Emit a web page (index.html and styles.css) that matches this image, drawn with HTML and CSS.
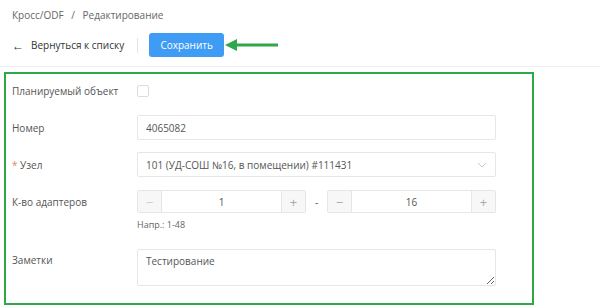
FILE: index.html
```html
<!DOCTYPE html>
<html lang="ru">
  <head>
    <meta charset="UTF-8" />
    <meta name="viewport" content="width=device-width, initial-scale=1.0" />
    <title>Кросс/ODF - Редактирование</title>
    <link rel="stylesheet" href="styles.css">
  </head>
  <body>
    <!-- breadcrumbs -->
    <div class="crumbs">Кросс/ODF <span class="sep">/</span> Редактирование</div>

    <!-- toolbar -->
    <div class="toolbar">
      <a class="back" href="#"><span class="back-arrow">&#8592;</span>Вернуться к списку</a>
      <span class="divider"></span>
      <button class="save">Сохранить</button>
      <svg class="pointer" width="56" height="14" viewBox="0 0 56 14">
        <path d="M1 7 L13 1 L13 5.5 L54 5.5 L54 8.5 L13 8.5 L13 13 Z" fill="#2ea84a" />
      </svg>
    </div>

    <!-- form -->
    <form class="myform" onsubmit="return false">
      <div class="row">
        <label class="lbl">Планируемый объект</label>
        <span class="check"></span>
      </div>
      <div class="row">
        <label class="lbl">Номер</label>
        <input class="myinput" type="text" value="4065082" />
      </div>
      <div class="row">
        <label class="lbl"><span class="req">*</span> Узел</label>
        <div class="myselect">
          <span>101 (УД-СОШ №16, в помещении) #111431</span>
          <svg width="10" height="6" viewBox="0 0 10 6">
            <path d="M1 1 L5 5 L9 1" fill="none" stroke="#c8c8c8" stroke-width="1" />
          </svg>
        </div>
      </div>
      <div class="row row-tight">
        <label class="lbl">К-во адаптеров</label>
        <div class="range">
          <div class="stepper">
            <span class="step-btn minus">&minus;</span>
            <span class="step-val">1</span>
            <span class="step-btn">+</span>
          </div>
          <span class="dash">-</span>
          <div class="stepper">
            <span class="step-btn">&minus;</span>
            <span class="step-val">16</span>
            <span class="step-btn">+</span>
          </div>
        </div>
      </div>
      <div class="hint">Напр.: 1-48</div>
      <div class="row row-notes">
        <label class="lbl">Заметки</label>
        <textarea class="myinput notes">Тестирование</textarea>
      </div>
    </form>
  </body>
</html>
```

FILE: styles.css
```css
body {
  margin: 0;
  font-family: "Open Sans", "Noto Sans", sans-serif;
  font-size: 10px;
  color: #555;
  background: #fff;
}

.crumbs {
  padding: 7px 12px 0;
  height: 17px;
  line-height: 17px;
  color: #666;
}
.crumbs .sep {
  margin: 0 5px;
}

/* toolbar */
.toolbar {
  height: 42px;
  display: flex;
  align-items: center;
  padding: 0 12px;
  border-bottom: 1px solid #eef0ef;
}
.back {
  color: #333;
  text-decoration: none;
  display: flex;
  align-items: center;
}
.back-arrow {
  width: 19px;
  font-size: 12px;
}
.divider {
  width: 1px;
  height: 15px;
  background: #e4e4e4;
  margin: 0 11px 0 13px;
}
.save {
  width: 75px;
  height: 24px;
  border: none;
  border-radius: 3px;
  background-color: #3f9cf5;
  color: #fff;
  font-family: inherit;
  font-size: 10px;
  padding: 0;
  cursor: pointer;
}

/* form */
.myform {
  width: 520px;
  margin: 5px 0 0 4px;
  border: 2px solid #2ea84a;
  padding: 4px 0 17px 6px;
}
.row {
  display: flex;
  align-items: center;
  min-height: 25px;
  margin-bottom: 12px;
}
.row-tight {
  margin-bottom: 5px;
}
.row-notes {
  align-items: flex-start;
  margin: 18px 0 0;
}
.row-notes .lbl {
  padding-top: 4px;
}
.lbl {
  width: 125px;
  flex: none;
}
.req {
  color: #e8826e;
}
.check {
  width: 10px;
  height: 10px;
  border: 1px solid #dcdcdc;
  border-radius: 2px;
}
.myinput {
  box-sizing: border-box;
  width: 359px;
  height: 25px;
  padding: 0 8px;
  border: 1px solid #e6e6e6;
  border-radius: 2px;
  font-family: inherit;
  font-size: 10px;
  color: #555;
  outline: none;
}
.myselect {
  box-sizing: border-box;
  width: 359px;
  height: 25px;
  padding: 0 8px;
  border: 1px solid #e6e6e6;
  border-radius: 2px;
  display: flex;
  align-items: center;
  justify-content: space-between;
  color: #555;
}
.range {
  display: flex;
  align-items: center;
}
.stepper {
  box-sizing: border-box;
  width: 169px;
  height: 23px;
  display: flex;
  border: 1px solid #e6e6e6;
  border-radius: 2px;
}
.step-btn {
  width: 23px;
  flex: none;
  background: #f7f7f7;
  color: #aaa;
  display: flex;
  align-items: center;
  justify-content: center;
  font-size: 13px;
}
.step-btn:first-child {
  border-right: 1px solid #e6e6e6;
}
.step-btn:last-child {
  border-left: 1px solid #e6e6e6;
}
.step-btn.minus {
  color: #ccc;
}
.step-val {
  flex: 1;
  display: flex;
  align-items: center;
  justify-content: center;
}
.dash {
  width: 21px;
  text-align: center;
}
.hint {
  margin-left: 125px;
  font-size: 9px;
  color: #666;
  line-height: 12px;
}
.notes {
  height: 37px;
  padding: 4px 8px;
  resize: vertical;
}
```
